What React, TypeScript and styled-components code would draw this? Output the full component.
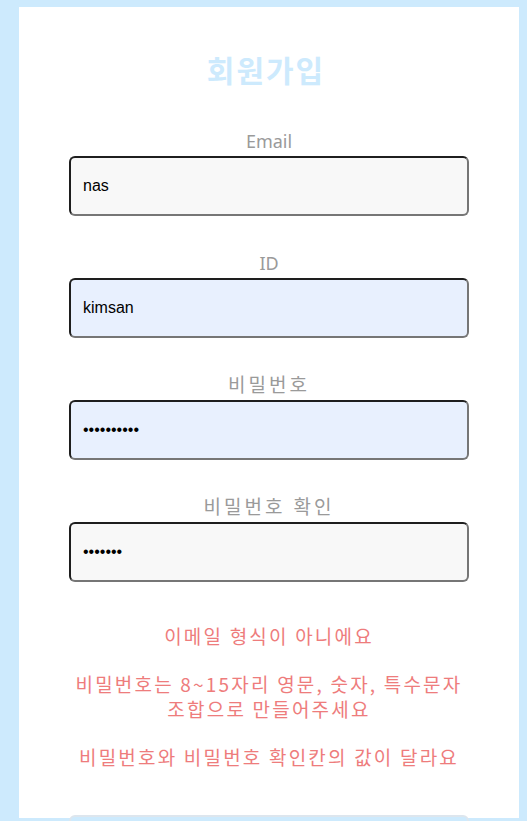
import styled, { createGlobalStyle } from 'styled-components';

const GlobalStyle = createGlobalStyle`
  html, body {
    margin: 0;
    padding: 0;
    background-color: #cdeafd;
    overflow: hidden;
  }
  body {
    font-family: "Noto Sans", "Noto Sans CJK KR", sans-serif;
  }
`;

const Page = styled.div`
  height: 821px;
  padding: 7px 8px 0 19px;
  box-sizing: border-box;
`;

const Card = styled.main`
  width: 500px;
  height: 811px;
  background-color: #fff;
  display: flex;
  flex-direction: column;
  align-items: center;
  padding-top: 43px;
  box-sizing: border-box;
`;

const Title = styled.h1`
  margin: 0 0 41px;
  padding-right: 6px;
  font-size: 30px;
  line-height: 38px;
  letter-spacing: 2px;
  font-weight: 700;
  color: #cdeafd;
  font-family: "Noto Sans CJK KR", sans-serif;
`;

const Form = styled.form`
  width: 400px;
  display: flex;
  flex-direction: column;
  gap: 35px;
`;

const Field = styled.div`
  display: flex;
  flex-direction: column;
  align-items: center;
  gap: 3px;
`;

const Label = styled.label<{ $ko?: boolean }>`
  font-size: ${(p) => (p.$ko ? '19px' : '18px')};
  line-height: 24px;
  letter-spacing: ${(p) => (p.$ko ? '3px' : '0')};
  color: #9a9a9a;
  font-family: "Noto Sans", "Noto Sans CJK KR", sans-serif;
`;

const Input = styled.input<{ $filled?: boolean }>`
  width: 400px;
  height: 60px;
  box-sizing: border-box;
  padding: 0 12px;
  border-radius: 6px;
  border-width: 2px;
  border-style: solid;
  border-color: #1e1e1e #767676 #767676 #1e1e1e;
  background-color: ${(p) => (p.$filled ? '#e8f0fe' : '#f8f8f8')};
  font-family: "Liberation Sans", Arial, sans-serif;
  font-size: 16px;
  color: #000;
  outline: none;
`;

const Messages = styled.div`
  width: 400px;
  margin-top: 41px;
  display: flex;
  flex-direction: column;
  gap: 23px;
`;

const ErrorText = styled.p`
  margin: 0;
  text-align: center;
  font-size: 19px;
  line-height: 25px;
  letter-spacing: 2.2px;
  color: #ee7c7c;
  font-family: "Noto Sans CJK KR", sans-serif;
`;

const SubmitButton = styled.button`
  margin-top: 46px;
  width: 400px;
  height: 50px;
  flex-shrink: 0;
  border-radius: 6px;
  border: 2px solid #dde6ee;
  background-color: #cdeafd;
  font-family: "Noto Sans CJK KR", sans-serif;
  font-size: 18px;
  color: #fff;
`;

const fields = [
  { id: 'email', label: 'Email', type: 'text', value: 'nas', filled: false, ko: false },
  { id: 'userId', label: 'ID', type: 'text', value: 'kimsan', filled: true, ko: false },
  { id: 'pw', label: '비밀번호', type: 'password', value: 'abcdefghij', filled: true, ko: true },
  { id: 'pwCheck', label: '비밀번호 확인', type: 'password', value: 'abcdefg', filled: false, ko: true },
];

const errors = [
  '이메일 형식이 아니에요',
  '비밀번호는 8~15자리 영문, 숫자, 특수문자 조합으로 만들어주세요',
  '비밀번호와 비밀번호 확인칸의 값이 달라요',
];

export default function App() {
  return (
    <>
      <GlobalStyle />
      <Page>
        <Card>
          <Title>회원가입</Title>
          <Form onSubmit={(e) => e.preventDefault()}>
            {fields.map((f) => (
              <Field key={f.id}>
                <Label htmlFor={f.id} $ko={f.ko}>
                  {f.label}
                </Label>
                <Input
                  id={f.id}
                  type={f.type}
                  defaultValue={f.value}
                  $filled={f.filled}
                />
              </Field>
            ))}
          </Form>
          <Messages>
            {errors.map((msg) => (
              <ErrorText key={msg}>{msg}</ErrorText>
            ))}
          </Messages>
          <SubmitButton type="button">회원가입</SubmitButton>
        </Card>
      </Page>
    </>
  );
}
